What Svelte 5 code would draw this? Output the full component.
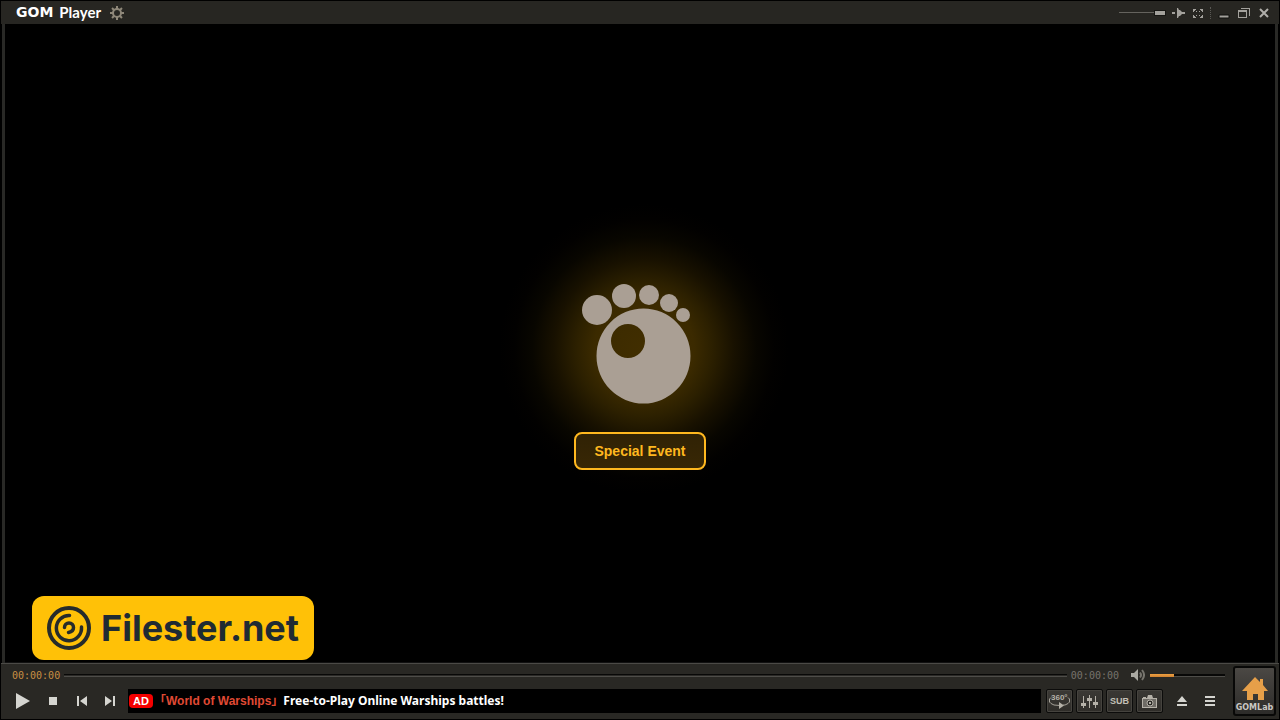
<script lang="ts">
  let opacity = 100;
  let position = 0;
  let volume = 32;

  const TOES = [
    { cx: 15, cy: 27, r: 15 },
    { cx: 42, cy: 13, r: 12 },
    { cx: 67, cy: 12, r: 10 },
    { cx: 87, cy: 20, r: 9 },
    { cx: 101, cy: 32, r: 7 }
  ];

  const elapsed = '00:00:00';
  const duration = '00:00:00';
  // Angles of the teeth around the settings cog.
  const TEETH = [0, 45, 90, 135, 180, 225, 270, 315];
</script>

<div class="player">
  <header class="titlebar">
    <h1><span class="gom">GOM</span> Player</h1>
    <button class="cog" aria-label="Settings">
      <svg width="14" height="14" viewBox="0 0 14 14">
        <circle class="ring" cx="7" cy="7" r="4" />
        {#each TEETH as angle}
          <rect x="6" y="0" width="2" height="3" transform={`rotate(${angle} 7 7)`} />
        {/each}
      </svg>
    </button>

    <div class="window-tools">
      <input class="opacity" type="range" min="0" max="100" bind:value={opacity} aria-label="Opacity" />
      <button aria-label="Always on top">
        <svg width="14" height="12" viewBox="0 0 14 12">
          <path d="M1 5h3v2H1zM6 1h1l1 2h1l2 2h3v2h-3L9 9H8l-1 2H6z" />
        </svg>
      </button>
      <button aria-label="Full screen">
        <svg width="12" height="12" viewBox="0 0 12 12">
          <path
            d="M1 2h3v1H3v1H2v1H1zM8 2h3v3h-1V4H9V3H8zM1 8h1v1h1v1h1v1H1zM10 8h1v3H8v-1h1V9h1zM4 4h1v1H4zM7 4h1v1H7zM4 8h1v1H4zM7 8h1v1H7z"
          />
        </svg>
      </button>
      <span class="divider"></span>
      <button aria-label="Minimize">
        <svg width="12" height="12" viewBox="0 0 12 12"><path d="M1 8h10v3H1z" stroke="#11110f" /></svg>
      </button>
      <button aria-label="Restore">
        <svg width="12" height="12" viewBox="0 0 12 12">
          <path d="M3 1h9v8h-1V2H3zM0 3h9v8H0zM1 5v5h7V5z" fill-rule="evenodd" />
        </svg>
      </button>
      <button aria-label="Close">
        <svg width="12" height="12" viewBox="0 0 12 12">
          <path class="cross" d="M2 2l8 8M10 2l-8 8" />
        </svg>
      </button>
    </div>
  </header>

  <main class="stage">
    <div class="hero">
      <svg class="foot" width="109" height="121" viewBox="0 0 109 121" role="img" aria-label="GOM">
        {#each TOES as toe}
          <circle cx={toe.cx} cy={toe.cy} r={toe.r} />
        {/each}
        <path
          fill-rule="evenodd"
          d="M61.500 25.500a47 47.500 0 1 0 0 95a47 47.500 0 1 0 0-95zM46 41a17 17 0 1 1 0 34a17 17 0 1 1 0-34z"
        />
      </svg>
      <button class="event">Special Event</button>
    </div>

    <a class="badge" href="#filester">
      <svg width="44" height="44" viewBox="0 0 44 44" aria-hidden="true">
        <circle cx="22" cy="22" r="20" />
        <path class="swirl" d="M22.500 9.500A12.600 12.600 0 1 0 34.500 21" />
        <path class="swirl" d="M17.500 21.500a4.500 4.500 0 0 1 9 0q0 4-5 5" />
      </svg>
      <span>Filester.net</span>
    </a>
  </main>

  <footer class="controls">
    <div class="rows">
      <div class="seek-row">
        <time class="elapsed">{elapsed}</time>
        <input class="seek" type="range" min="0" max="100" bind:value={position} aria-label="Seek" />
        <time>{duration}</time>
        <button class="speaker" aria-label="Mute">
          <svg width="14" height="12" viewBox="0 0 14 12">
            <path d="M0 4h3l4-4v12L3 8H0z" />
            <path class="wave" d="M9 3.500q2 2.500 0 5M11 1q4 5 0 10" />
          </svg>
        </button>
        <input
          class="volume"
          type="range"
          min="0"
          max="100"
          bind:value={volume}
          style={`--level: ${volume}%`}
          aria-label="Volume"
        />
      </div>

      <div class="button-row">
        <div class="transport">
          <button class="wide" aria-label="Play">
            <svg width="16" height="16" viewBox="0 0 16 16"><path d="M1 0l14 8-14 8z" /></svg>
          </button>
          <button class="wide" aria-label="Stop">
            <svg width="8" height="8" viewBox="0 0 8 8"><path d="M0 0h8v8H0z" /></svg>
          </button>
          <button aria-label="Previous">
            <svg width="10" height="10" viewBox="0 0 10 10"><path d="M0 0h2v10H0zM10 0v10L3 5z" /></svg>
          </button>
          <button aria-label="Next">
            <svg width="10" height="10" viewBox="0 0 10 10"><path d="M8 0h2v10H8zM0 0v10l7-5z" /></svg>
          </button>
        </div>

        <a class="ticker" href="#warships">
          <span class="ad">AD</span>
          <span class="game">｢World of Warships｣</span>
          <span class="slogan">Free-to-Play Online Warships battles!</span>
        </a>

        <div class="tools">
          <button class="tool" aria-label="360 degree video">
            <svg width="23" height="18" viewBox="0 0 23 18">
              <text x="3" y="8">360°</text>
              <path
                class="line"
                d="M3 5.500L1.500 7v3L3 11.500 6 13l6 .5M20 5.500L21.500 7v3L20 11.500 17 13h-2"
              />
              <path d="M11 10l5 3.500-5 3.500z" />
            </svg>
          </button>
          <button class="tool" aria-label="Equalizer">
            <svg width="17" height="15" viewBox="0 0 17 15">
              <path d="M2 2h1v12H2zM8 1h1v13H8zM14 2h1v12h-1zM0 9h5v3H0zM6 4h5v3H6zM12 8h5v3h-5z" />
            </svg>
          </button>
          <button class="tool">SUB</button>
          <button class="tool" aria-label="Capture">
            <svg width="15" height="13" viewBox="0 0 15 13">
              <path d="M0 3h1V2h3v1h1l1-3h4l1 3h4v10H0zM1 4v8h13V4z" fill-rule="evenodd" />
              <path d="M1 4h13v8H1z" opacity=".45" />
              <circle class="lens" cx="8" cy="8" r="3" />
              <path d="M7 7h2v2H7z" />
            </svg>
          </button>
        </div>

        <div class="extras">
          <button aria-label="Open">
            <svg width="10" height="10" viewBox="0 0 10 10"><path d="M5 0l5 6H0zM0 8h10v2H0z" /></svg>
          </button>
          <button aria-label="Playlist">
            <svg width="10" height="10" viewBox="0 0 10 10"><path d="M0 0h10v2H0zM0 4h10v2H0zM0 8h10v2H0z" /></svg>
          </button>
        </div>
      </div>
    </div>

    <a class="lab" href="#gomlab">
      <svg width="26" height="23" viewBox="0 0 26 23" aria-hidden="true">
        <path d="M13 0l5 5V2h3v6l5 6h-4v9h-6v-6h-5v6H5v-9H0z" />
      </svg>
      <span>GOMLab</span>
    </a>
  </footer>
</div>

<style>
  :global(body) {
    background: #000;
  }

  .player {
    display: flex;
    flex-direction: column;
    box-sizing: border-box;
    min-height: 100vh;
    padding: 1px;
    background: #000;
    color: #fff;
    font-family: 'Liberation Sans', Arial, sans-serif;
  }

  button {
    display: flex;
    align-items: center;
    justify-content: center;
    padding: 0;
    border: 0;
    background: none;
    color: inherit;
    font: inherit;
  }

  a {
    color: inherit;
    text-decoration: none;
  }

  input[type='range'] {
    appearance: none;
    margin: 0;
    height: 8px;
    background: transparent;
  }

  input::-webkit-slider-thumb {
    appearance: none;
    width: 0;
    height: 0;
  }

  .titlebar {
    display: flex;
    align-items: center;
    height: 23px;
    padding: 0 5px 0 15px;
    background: #272622;
  }

  h1 {
    display: flex;
    align-items: center;
    gap: 6px;
    margin: 0;
    padding-bottom: 2px;
    font: 700 15px Lato, sans-serif;
  }

  .gom {
    font: 700 14px 'DejaVu Sans', sans-serif;
  }

  .cog {
    margin-left: 9px;
    fill: #8e8779;
  }

  .ring {
    fill: none;
    stroke: #8e8779;
    stroke-width: 2;
  }

  .window-tools {
    display: flex;
    align-items: center;
    margin-left: auto;
    fill: #a3a19c;
  }

  .window-tools button {
    width: 20px;
    height: 22px;
  }

  .opacity {
    width: 47px;
    margin-right: 2px !important;
  }

  .opacity::-webkit-slider-runnable-track {
    display: flex;
    align-items: center;
    height: 6px;
    background: linear-gradient(#65635e, #65635e) center / 100% 1px no-repeat;
  }

  .opacity::-webkit-slider-thumb {
    width: 12px;
    height: 6px;
    border: 1px solid #171714;
    background: #a3a19c;
  }

  .divider {
    height: 12px;
    margin: 0 3px 0 2px;
    border-left: 1px dotted #5a5955;
  }

  .cross {
    stroke: #b0aeaa;
    stroke-width: 2;
  }

  .stage {
    position: relative;
    flex: 1;
    display: flex;
    flex-direction: column;
    align-items: center;
    justify-content: center;
    border: solid #292926;
    border-width: 0 3px;
    margin: 0 1px;
    box-shadow: inset 0 -1px #111;
  }

  .hero {
    display: flex;
    flex-direction: column;
    align-items: center;
    width: 320px;
    padding: 90px 0 25px;
    background: radial-gradient(
      circle at 164px 156px,
      #412e00 0,
      #3b2a00 50px,
      #2c2000 68px,
      #181100 90px,
      #080600 112px,
      #020100 130px,
      #000 145px
    );
  }

  .foot {
    margin: 0 8px 28px 0;
    fill: #aa9f94;
  }

  .event {
    width: 132px;
    height: 38px;
    border: 2px solid #ffb81f;
    border-radius: 8px;
    background: linear-gradient(#302205, #382705);
    color: #ffb81f;
    font-size: 14px;
    font-weight: 700;
    white-space: nowrap;
  }

  .badge {
    position: absolute;
    bottom: 3px;
    left: 27px;
    display: flex;
    align-items: center;
    gap: 10px;
    box-sizing: border-box;
    height: 64px;
    padding: 0 15px;
    border-radius: 12px;
    background: #ffc107;
    color: #1f2b33;
    font: 700 36px Inter, sans-serif;
  }

  .badge svg {
    fill: none;
    stroke: #262b2b;
    stroke-width: 4;
    stroke-linecap: round;
  }

  .badge .swirl {
    stroke-width: 3.500;
  }

  .controls {
    display: flex;
    align-items: center;
    gap: 8px;
    padding: 0 3px 1px 7px;
    border-top: 1px solid #4b4a46;
    background: #292824;
  }

  .rows {
    flex: 1;
    min-width: 0;
    padding-bottom: 5px;
  }

  .seek-row {
    display: flex;
    align-items: center;
    height: 22px;
    padding-left: 4px;
    margin-bottom: 3px;
    color: #77736c;
    font: 10px 'DejaVu Sans Mono', monospace;
  }

  .elapsed {
    color: #c98f43;
  }

  .seek {
    flex: 1;
    min-width: 0;
    margin: 0 4px !important;
  }

  .seek::-webkit-slider-runnable-track {
    height: 3px;
    background: linear-gradient(#080807 0 1px, #2a2926 1px 2px, #4e4d49 2px);
  }

  .speaker {
    margin: 0 5px 0 12px;
    fill: #aaa9a2;
  }

  .wave {
    fill: none;
    stroke: #77756e;
    stroke-width: 2;
  }

  .volume {
    width: 75px;
  }

  .volume::-webkit-slider-runnable-track {
    height: 3px;
    background:
      linear-gradient(#efa243, #cf8130) left / var(--level) 100% no-repeat,
      linear-gradient(#080807 0 2px, #4e4d49 2px);
  }

  .button-row,
  .transport,
  .tools,
  .extras {
    display: flex;
    align-items: center;
  }

  .transport,
  .extras {
    fill: #d5d5d0;
  }

  .transport button {
    width: 28px;
    height: 24px;
  }

  .transport .wide {
    width: 30px;
  }

  .ticker {
    flex: 1;
    min-width: 0;
    display: flex;
    align-items: baseline;
    height: 24px;
    margin: 0 5px 0 4px;
    overflow: hidden;
    background: #000;
    font-size: 12px;
    font-weight: 700;
    line-height: 24px;
    white-space: nowrap;
  }

  .ad {
    width: 24px;
    margin: 0 7px 0 1px;
    border-radius: 4px;
    background: #f40000;
    font-size: 11px;
    line-height: 14px;
    text-align: center;
  }

  .game {
    margin-right: 6px;
    color: #e04a34;
    font-family: 'Liberation Sans', 'Noto Sans CJK JP', sans-serif;
  }

  .slogan {
    font-family: 'Noto Sans', sans-serif;
  }

  .tools {
    gap: 3px;
  }

  .tool {
    width: 27px;
    height: 24px;
    border: 1px solid #0c0c0b;
    border-radius: 2px;
    background: linear-gradient(#3b3935, #2f2d29);
    box-shadow: inset 0 0 0 1px #45433e;
    color: #c4c0b7;
    fill: #b5b1a8;
    font-size: 9px;
    font-weight: 700;
  }

  .tool text {
    font-size: 8px;
  }

  .line {
    fill: none;
    stroke: #a5a198;
  }

  .lens {
    fill: #292824;
    stroke: #b5b1a8;
  }

  .extras {
    margin: 0 1px 0 5px;
  }

  .extras button {
    width: 28px;
    height: 24px;
  }

  .lab {
    display: flex;
    flex-direction: column;
    align-items: center;
    justify-content: flex-end;
    box-sizing: border-box;
    width: 43px;
    height: 50px;
    padding-bottom: 2px;
    border: 2px solid #080807;
    border-radius: 3px;
    background: linear-gradient(#4b4844, #2c2b29);
    color: #c9c7c2;
    fill: #e69f49;
    font: 700 8px 'DejaVu Sans', sans-serif;
  }

  .lab span {
    margin-top: 3px;
  }
</style>
